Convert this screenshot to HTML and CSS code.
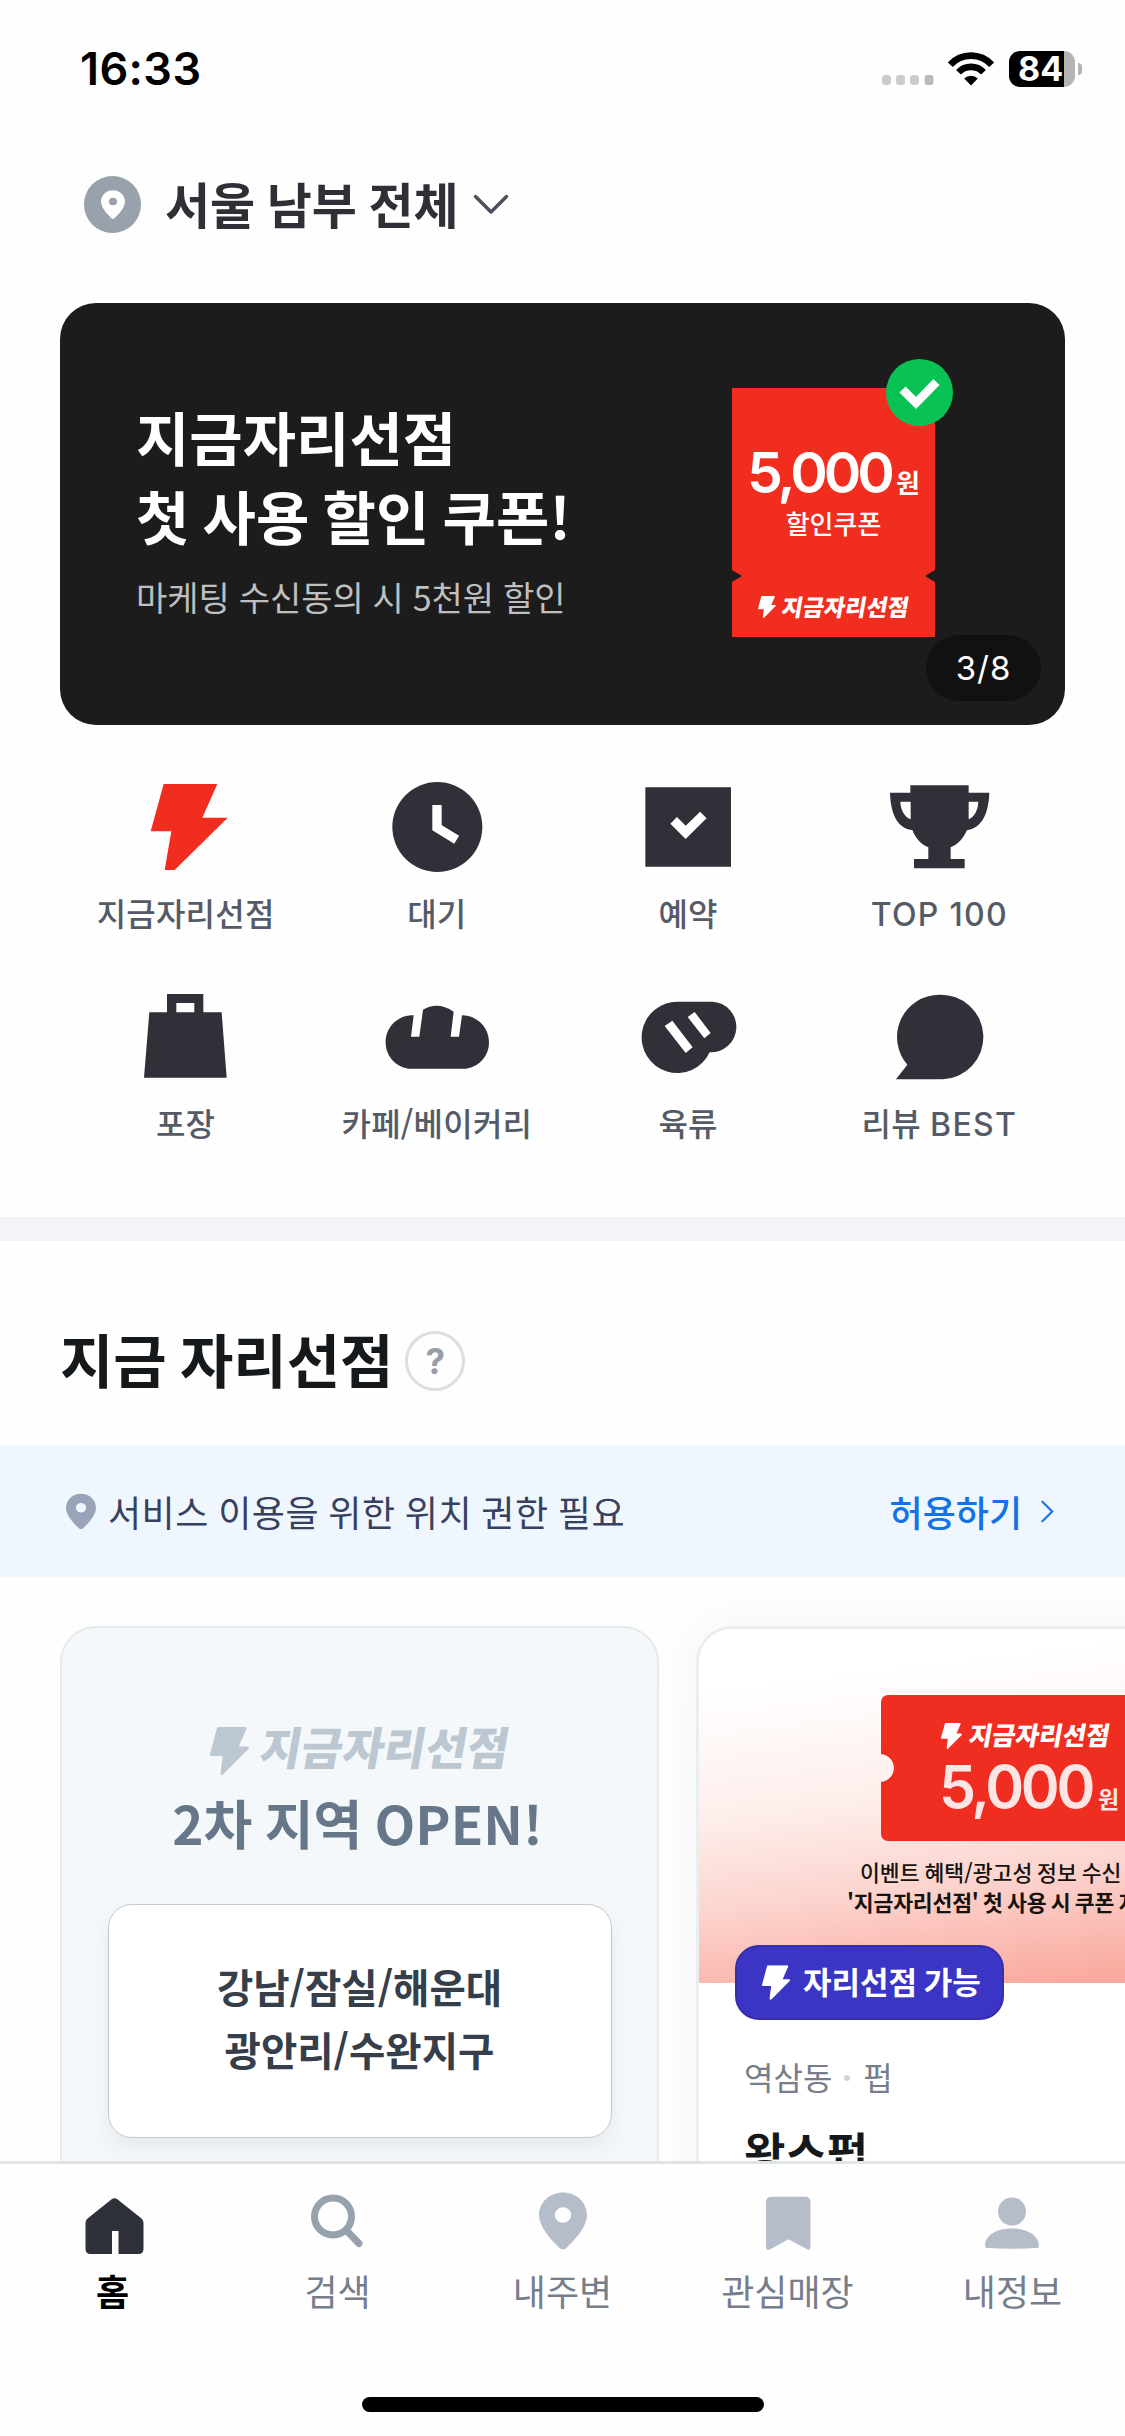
FILE: index.html
```html
<!DOCTYPE html>
<html lang="ko">
<head>
<meta charset="utf-8">
<title>지금자리선점</title>
<link rel="stylesheet" href="styles.css">
</head>
<body>
<svg class="defs" width="0" height="0" aria-hidden="true">
  <symbol id="bolt" viewBox="0 0 39 48"><path d="M8.500 1.500H35L26.500 21H37.500L12 46.500L14.500 27.500H1.500Z" fill="currentColor" stroke="currentColor" stroke-width="3" stroke-linejoin="round"/></symbol>
  <symbol id="pin" viewBox="0 0 48 58"><path fill-rule="evenodd" fill="currentColor" d="M24 .5C10.700 .5 0 10.400 0 23C0 33.500 9.500 45.500 21 56.300Q24 58.700 27 56.300C38.500 45.500 48 33.500 48 23C48 10.400 37.300 .5 24 .5ZM24 15.300A8.200 7.700 0 1 1 24 30.700A8.200 7.700 0 1 1 24 15.300Z"/></symbol>
</svg>
<div class="app">
  <header class="status">
    <span class="time">16:33</span>
    <div class="indicators">
      <svg class="dots" viewBox="0 0 52 10"><g fill="#cbcbcb"><rect width="9" height="10" rx="3.500"/><rect x="14" width="9" height="10" rx="3.500"/><rect x="28" width="9" height="10" rx="3.500"/></g><rect x="42.500" width="9" height="10" rx="3" fill="#bababa"/></svg>
      <svg class="wifi" viewBox="0 0 46 34"><g fill="none" stroke="#000" stroke-width="6.600"><path d="M2.300 12.700A28.200 28.200 0 0 1 43.700 12.700"/><path d="M10.500 20.300A17.200 17.200 0 0 1 35.500 20.300"/></g><path d="M23 33.500L16.200 26.600A9.500 9.500 0 0 1 29.800 26.600Z"/></svg>
      <div class="battery"><span>84</span></div>
      <i class="nub"></i>
    </div>
  </header>

  <div class="location">
    <span class="location-mark"><svg viewBox="0 0 48 58"><use href="#pin"/></svg></span>
    <span class="location-name">서울 남부 전체</span>
    <svg class="chevron" viewBox="0 0 34 20"><path d="M1.500 1.500L17 17L32.500 1.500" fill="none" stroke="#4a4f59" stroke-width="3.400" stroke-linecap="round" stroke-linejoin="round"/></svg>
  </div>

  <section class="banner">
    <div class="banner-copy">
      <h2>지금자리선점<br>첫 사용 할인 쿠폰!</h2>
      <p>마케팅 수신동의 시 5천원 할인</p>
    </div>
    <div class="coupon">
      <div class="coupon-face">
        <div class="amount">5,000<small>원</small></div>
        <div class="coupon-label">할인쿠폰</div>
        <div class="logo logo-coupon"><svg viewBox="0 0 39 48"><use href="#bolt"/></svg><span>지금자리선점</span></div>
      </div>
      <svg class="coupon-check" viewBox="0 0 67 67"><circle cx="33.500" cy="33.500" r="33.500" fill="#08c253"/><path d="M16.500 30.500L30 44L50.500 23" fill="none" stroke="#fff" stroke-width="8.600"/></svg>
    </div>
    <span class="pager">3/8</span>
  </section>

  <nav class="categories">
    <a><svg viewBox="217 81 320 300"><path fill="#f12d20" d="M312 102H473L428 203H504L345 360H315L335 244H273Z"/></svg><span>지금자리선점</span></a>
    <a><svg viewBox="971 81 320 300"><circle cx="1131" cy="231" r="135"/><path d="M1130 165V233L1189 269" class="cut" stroke-width="28"/></svg><span>대기</span></a>
    <a><svg viewBox="225 81 320 300"><path d="M256 112H513V350H256Z"/><path d="M341 211L377 247L430 195" class="cut" stroke-width="28"/></svg><span>예약</span></a>
    <a><svg viewBox="978 81 320 300"><path fill-rule="evenodd" d="M1051 106H1226V128H1288C1286 195 1262 236 1221 240C1209 267 1195 282 1172 292V327H1214V355H1062V327H1105V292C1082 282 1068 267 1057 240C1014 236 992 195 990 128H1051ZM1021 155C1022 180 1033 200 1052 208V155ZM1226 155V208C1244 200 1254 180 1255 155Z"/></svg><span><b>TOP 100</b></span></a>
    <a><svg viewBox="217 711 320 300"><path fill-rule="evenodd" d="M322 732H431V787H486L501 983H253L269 787H322ZM350 759V787H404V759Z"/></svg><span>포장</span></a>
    <a><svg viewBox="971 711 320 300"><path d="M1060 796L1052 860H1077L1088 779Q1132 753 1180 785L1171 860H1196L1205 796C1252 797 1286 832 1286 877C1286 917 1258 950 1218 956H1044C1004 950 976 917 976 877C976 832 1011 797 1055 796Z"/></svg><span>카페/베이커리</span></a>
    <a><svg viewBox="223 711 320 300"><path d="M352 755H455A76 76 0 0 1 447 907A107 107 0 1 1 352 755Z"/><path fill="#fff" d="M312 828L335 812L396 892L375 909ZM381 801L402 786L450 849L431 865Z"/></svg><span>육류</span></a>
    <a><svg viewBox="980 711 320 300"><path d="M1140 734A127 127 0 0 1 1150 988H1010L1044 944A127 127 0 0 1 1140 734Z"/></svg><span>리뷰 <b>BEST</b></span></a>
  </nav>

  <div class="divider"></div>

  <div class="section-head"><h1>지금 자리선점</h1><span class="help">?</span></div>

  <div class="notice">
    <svg class="notice-pin" viewBox="0 0 48 58"><use href="#pin"/></svg>
    <span class="notice-text">서비스 이용을 위한 위치 권한 필요</span>
    <a class="notice-action">허용하기<svg viewBox="0 0 14 24"><path d="M1.500 1.500L12 12L1.500 22.500" fill="none" stroke="#1a76ea" stroke-width="2.400" stroke-linecap="round"/></svg></a>
  </div>

  <section class="cards">
    <article class="card card-region">
      <div class="logo logo-region"><svg viewBox="0 0 39 48"><use href="#bolt"/></svg><span>지금자리선점</span></div>
      <h3>2차 지역 OPEN!</h3>
      <div class="region-list">강남/잠실/해운대<br>광안리/수완지구</div>
    </article>
    <article class="card card-store">
      <div class="promo">
        <div class="ticket">
          <div class="logo logo-ticket"><svg viewBox="0 0 39 48"><use href="#bolt"/></svg><span>지금자리선점</span></div>
          <div class="amount amount-ticket">5,000<small>원</small></div>
        </div>
        <p class="promo-line">이벤트 혜택/광고성 정보 수신</p>
        <p class="promo-line promo-strong">'지금자리선점' 첫 사용 시 쿠폰 지급</p>
      </div>
      <div class="badge"><svg viewBox="0 0 39 48"><use href="#bolt"/></svg><span>자리선점 가능</span></div>
      <div class="store-meta">역삼동<i></i>펍</div>
      <div class="store-name">왕스펍</div>
    </article>
  </section>

  <footer class="tabbar">
    <div class="tabs">
      <a class="active"><svg viewBox="-1.500 0 58 58"><path fill="#2e3138" d="M26.500 .9Q29 -.4 31.500 .9L56 20.500Q58 22 58 25V51Q58 56 53 56H33V33H26.500V56H5Q0 56 0 51V25Q0 22 2 20.500Z"/></svg><span>홈</span></a>
      <a><svg viewBox="1.500 0 58 58"><g fill="none" stroke="#98a1ae"><circle cx="25.500" cy="18.500" r="18.500" stroke-width="7"/><path d="M40 33.500L51.500 45.500" stroke-width="7" stroke-linecap="round"/></g></svg><span>검색</span></a>
      <a><svg class="tab-pin" viewBox="0 0 48 58"><use href="#pin"/></svg><span>내주변</span></a>
      <a><svg viewBox="0 0 58 58"><path fill="#b5bdca" d="M12.500 -1.200H46Q51.500 -1.200 51.500 4.500V50Q51 52.500 48.500 51.500L29.500 41.200L10.500 51.800Q7 52.500 7 49V4.500Q7 -1.200 12.500 -1.200Z"/></svg><span>관심매장</span></a>
      <a><svg viewBox="1 0 58 58"><g fill="#b5bdca"><circle cx="29" cy="13.500" r="14"/><path d="M2 47.500C2.500 36.500 14 30.500 29 30.500S55.500 36.500 56 47.500Q56 50 53.500 50Q29 51.600 4.500 50Q2 50 2 47.500Z"/></g></svg><span>내정보</span></a>
    </div>
    <div class="home-indicator"></div>
  </footer>
</div>
</body>
</html>
```
FILE: styles.css
```css
* { box-sizing: border-box; margin: 0; padding: 0; }
body { width: 1125px; background: #fefefe; font-family: "Noto Sans CJK KR", sans-serif; color: #15191c; }
svg { display: block; overflow: visible; flex: none; }
.defs { position: absolute; }
.app { width: 1125px; height: 2436px; display: flex; flex-direction: column; overflow: hidden; }
.app > * { flex: none; }

.status { height: 138px; padding: 0 43px 0 80px; display: flex; align-items: center; justify-content: space-between; }
.time { font: 600 45px/54px Inter, sans-serif; color: #000; letter-spacing: .4px; }
.indicators { display: flex; align-items: center; }
.dots { width: 52px; height: 10px; margin: 22px 14px 0 0; }
.wifi { width: 46px; height: 34px; margin-right: 15px; }
.battery { width: 66px; height: 36px; border-radius: 11px; background: linear-gradient(90deg, #000 55px, #b4b4b4 55px); display: flex; align-items: center; padding-left: 9px; }
.battery span { font: 700 34px/36px Inter, sans-serif; color: #fff; }
.nub { width: 4px; height: 12px; margin-left: 3px; border-radius: 0 4px 4px 0; background: #b4b4b4; }

.location { height: 132px; padding-left: 84px; display: flex; align-items: center; }
.location-mark { width: 57px; height: 57px; border-radius: 50%; background: #99a1ad; color: #fff; display: flex; align-items: center; justify-content: center; }
.location-mark svg { width: 24px; height: 29px; }
.location-name { margin-left: 24px; font-weight: 600; font-size: 49px; line-height: 60px; letter-spacing: -.2px; word-spacing: -1.500px; color: #2e3036; padding-bottom: 3px; }
.chevron { width: 34px; height: 20px; margin: 2px 0 0 16px; }

.banner { position: relative; margin: 33px 60px 0; height: 422px; border-radius: 36px; background: #1c1c1c; display: flex; align-items: flex-start; justify-content: space-between; padding: 85px 112px 0 76px; }
.banner-copy { padding-top: 9px; }
.banner h2 { font-size: 58px; line-height: 79px; font-weight: 700; word-spacing: -3px; color: #fff; }
.banner p { margin-top: 22px; font-size: 34px; line-height: 40px; word-spacing: -.7px; color: #bfbfbf; }
.coupon { position: relative; width: 221px; }
.coupon-face { width: 203px; height: 249px; background: #f12d20; color: #fff; padding-top: 51px; display: flex; flex-direction: column; align-items: center; clip-path: polygon(0 0, 100% 0, 100% 182px, 193px 188px, 100% 194px, 100% 100%, 0 100%, 0 194px, 10px 188px, 0 182px); }
.coupon-check { position: absolute; left: 154px; top: -29px; width: 67px; height: 67px; }
.amount { font: 600 57px/68px Inter, sans-serif; letter-spacing: -4px; white-space: nowrap; }
.amount small { font: 600 26px/30px "Noto Sans CJK KR", sans-serif; letter-spacing: 0; margin-left: 5px; }
.coupon-label { font-size: 26px; line-height: 32px; font-weight: 500; }
.logo { display: flex; align-items: center; white-space: nowrap; }
.logo span { font-weight: 900; transform: skewX(-10deg); }
.logo-coupon { margin-top: 57px; height: 22px; }
.logo-coupon svg { width: 18px; height: 22px; margin-right: 6px; }
.logo-coupon span { font-size: 23px; line-height: 22px; padding-bottom: 3px; }
.pager { position: absolute; right: 24px; bottom: 24px; width: 115px; height: 66px; border-radius: 33px; background: #111; color: #fff; font: 400 33px/66px Inter, sans-serif; letter-spacing: 1px; text-align: center; }

.categories { margin: 52px 60px 0; display: grid; grid-template-columns: repeat(4, 1fr); row-gap: 55px; }
.categories a { display: flex; flex-direction: column; align-items: center; }
.categories svg { width: 106.670px; height: 100px; fill: #312f38; }
.categories .cut { fill: none; stroke: #fff; }
.categories span { margin-top: 15px; font-size: 32px; line-height: 40px; font-weight: 500; letter-spacing: .2px; color: #555b66; white-space: nowrap; }
.categories b { font-family: Inter, sans-serif; font-weight: 500; line-height: 1; letter-spacing: 1.300px; }

.divider { margin-top: 75px; height: 24px; background: #f2f4f8; }
.section-head { height: 204px; padding: 36px 60px 0; display: flex; align-items: center; }
.section-head h1 { font-size: 58px; line-height: 72px; font-weight: 700; word-spacing: -3px; padding-bottom: 6px; }
.help { margin-left: 12px; width: 60px; height: 60px; border: 3px solid #dcdfe1; border-radius: 50%; font: 700 35px/54px Inter, sans-serif; color: #969eaa; text-align: center; }

.notice { height: 132px; background: #f0f6fd; padding: 0 71px 0 66px; display: flex; align-items: center; }
.notice-pin { width: 30px; height: 37px; color: #99a4ba; }
.notice-text { margin-left: 12px; font-size: 36px; letter-spacing: .5px; word-spacing: -1.300px; line-height: 48px; color: #37415f; }
.notice-action { margin-left: auto; display: flex; align-items: center; font-size: 36px; line-height: 48px; font-weight: 500; color: #1273e8; }
.notice-action svg { width: 13px; height: 23px; margin-left: 19px; }

.app > .cards { flex: 1 1 0; min-height: 0; overflow: hidden; padding: 49px 0 0 60px; display: flex; gap: 37px; align-items: flex-start; }
.card { flex: none; height: 900px; border-radius: 36px; }
.card-region { width: 599px; border: 2px solid #e6eaeb; background: #f4f8fb; display: flex; flex-direction: column; align-items: center; padding-top: 99px; }
.logo-region { height: 48px; color: #bcc7d1; align-items: flex-start; }
.logo-region svg { width: 39px; height: 48px; margin-right: 12px; }
.logo-region span { font-size: 45px; line-height: 38px; }
.card-region h3 { margin: 17px 4px 0 0; font-size: 53px; line-height: 60px; font-weight: 700; word-spacing: -2.500px; color: #667789; }
.region-list { margin-top: 52px; width: 504px; height: 234px; border: 1.500px solid #c6c9cb; border-radius: 24px; background: #fff; box-shadow: 0 10px 20px rgba(50, 60, 70, .07); padding-top: 49px; text-align: center; font-size: 39.500px; line-height: 63px; font-weight: 700; color: #363f49; }
.card-store { width: 599px; background: #fff; border: 3px solid #ebeeef; box-shadow: 0 0 50px rgba(0, 0, 0, .05); }
.promo { height: 354px; border-radius: 33px 33px 0 0; background: linear-gradient(173deg, #fff 15%, #fdeeeb 45%, #fcd5cf 66%, #f99f93 100%); display: flex; flex-direction: column; align-items: flex-start; padding-top: 66px; overflow: hidden; }
.ticket { margin-left: 182px; width: 291px; height: 146px; border-radius: 7px; background: radial-gradient(circle at -1px 73px, transparent 13.500px, #ef2d20 14.200px); color: #fff; padding: 28px 0 0 60px; }
.logo-ticket { height: 26px; }
.logo-ticket svg { width: 21px; height: 26px; margin-right: 7px; }
.logo-ticket span { font-size: 25.500px; line-height: 26px; padding-bottom: 4px; }
.amount-ticket { font-size: 59px; color: #fde5e4; margin: 4px 0 0 -2px; letter-spacing: -3.300px; }
.amount-ticket small { font-size: 23px; margin-left: 6px; }
.promo-line { margin: 16px 0 0 161px; font-size: 21.600px; line-height: 30px; word-spacing: -1.200px; font-weight: 500; color: #15120f; white-space: nowrap; }
.promo-strong { margin: 0 0 0 148px; font-weight: 700; letter-spacing: -.2px; word-spacing: -1.500px; }
.badge { position: relative; width: 269px; height: 75px; margin: -38px 0 0 36px; border: 2px solid #362fa9; border-radius: 24px; background: #3b35c6; color: #fff; display: flex; align-items: center; padding-left: 25px; }
.badge svg { width: 28px; height: 35px; }
.badge span { margin-left: 13px; font-size: 31px; line-height: 40px; font-weight: 600; word-spacing: -2px; padding-bottom: 4px; white-space: nowrap; }
.store-meta { margin: 34px 0 0 45px; display: flex; align-items: center; font-size: 32px; line-height: 44px; color: #777d89; }
.store-meta i { width: 6px; height: 6px; border-radius: 50%; background: #d2d5d8; margin: 4px 13px 0 12px; }
.store-name { margin: 24px 0 0 45px; font-size: 45px; line-height: 60px; font-weight: 700; }

.tabbar { height: 275px; border-top: 3px solid #e1e4e6; background: #fefefe; display: flex; flex-direction: column; align-items: center; }
.tabs { width: 1125px; display: grid; grid-template-columns: repeat(5, 1fr); padding-top: 34px; }
.tabs a { display: flex; flex-direction: column; align-items: center; font-size: 36px; line-height: 44px; color: #777e8b; }
.tabs svg { width: 58px; height: 58px; }
.tabs .tab-pin { width: 48px; color: #b5bdca; margin: -6px 0 6px; }
.tabs span { margin-top: 12px; }
.tabs .active { color: #000; font-weight: 700; }
.home-indicator { margin-top: 85px; width: 402px; height: 15px; border-radius: 8px; background: #000; }
```
